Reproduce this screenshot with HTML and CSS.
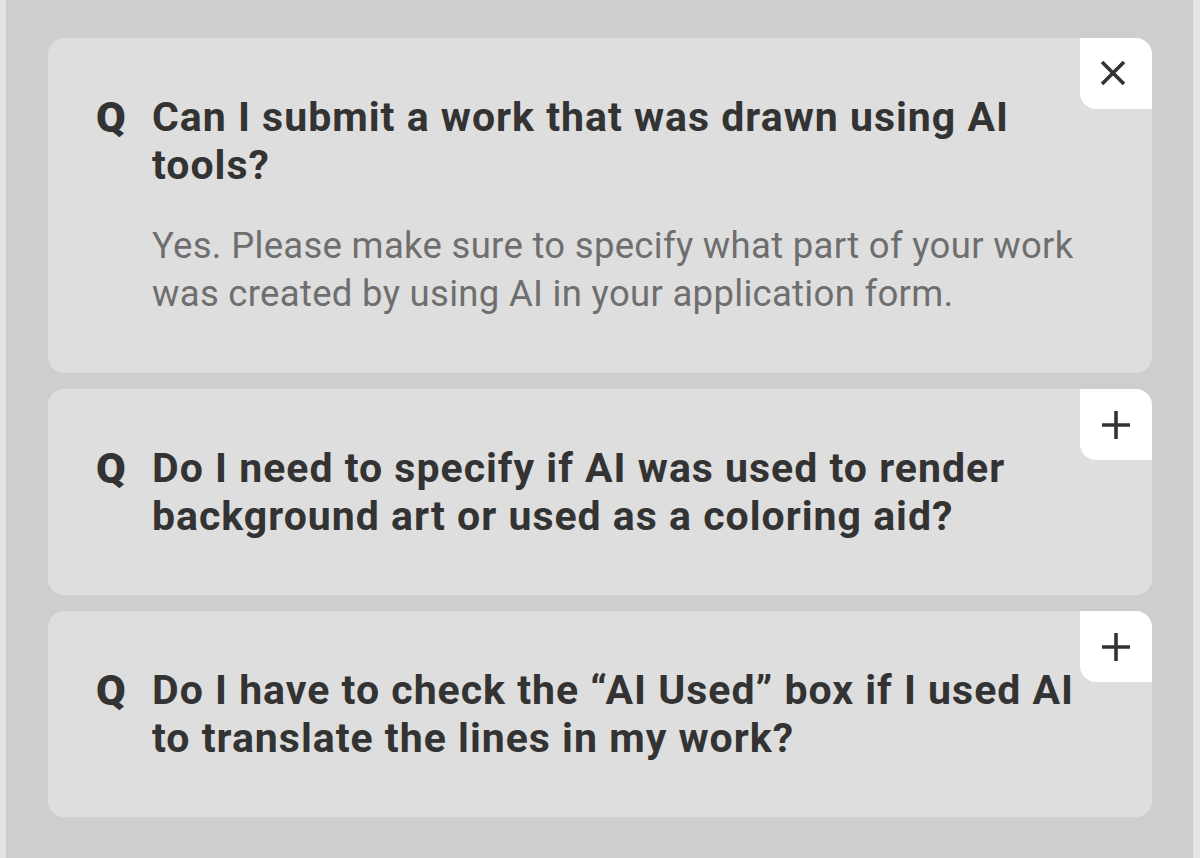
FILE: index.html
```html
<!DOCTYPE html>
<html lang="en">
<head>
<meta charset="utf-8">
<title>FAQ</title>
<link rel="stylesheet" href="styles.css">
</head>
<body>
<div class="page">
  <div class="faq">
    <div class="card">
      <button class="toggle close" aria-label="Close">
        <svg width="24" height="24" viewBox="0 0 24 24"><path d="M1 1 L23 23 M23 1 L1 23" stroke="#333" stroke-width="3.6" fill="none"/></svg>
      </button>
      <div class="question">
        <span class="q">Q</span>
        <div class="body">
          <h2 class="title">Can I submit a work that was drawn using AI tools?</h2>
          <p class="answer">Yes. Please make sure to specify what part of your work was created by using AI in your application form.</p>
        </div>
      </div>
    </div>
    <div class="card">
      <button class="toggle" aria-label="Open">
        <svg width="30" height="30" viewBox="0 0 30 30"><path d="M15 1 V29 M1 15 H29" stroke="#333" stroke-width="3.6" fill="none"/></svg>
      </button>
      <div class="question">
        <span class="q">Q</span>
        <div class="body">
          <h2 class="title">Do I need to specify if AI was used to render background art or used as a coloring aid?</h2>
        </div>
      </div>
    </div>
    <div class="card">
      <button class="toggle" aria-label="Open">
        <svg width="30" height="30" viewBox="0 0 30 30"><path d="M15 1 V29 M1 15 H29" stroke="#333" stroke-width="3.6" fill="none"/></svg>
      </button>
      <div class="question">
        <span class="q">Q</span>
        <div class="body">
          <h2 class="title">Do I have to check the “AI Used” box if I used AI to translate the lines in my work?</h2>
        </div>
      </div>
    </div>
  </div>
</div>
</body>
</html>
```
FILE: styles.css
```css
html, body {
  margin: 0;
  padding: 0;
}
body {
  background: #e4e4e4;
  font-family: Roboto, "Liberation Sans", sans-serif;
}
.page {
  margin: 0 7px 0 6px;
  min-height: 858px;
  background: #cecece;
  padding: 38px 41px 0 42px;
  box-sizing: border-box;
}
.faq {
  display: flex;
  flex-direction: column;
  gap: 16px;
}
.card {
  position: relative;
  background: #dedede;
  border-radius: 16px;
  padding: 55px 50px 55px 48px;
}
.toggle {
  position: absolute;
  top: 0;
  right: 0;
  width: 72px;
  height: 71px;
  border: 0;
  padding: 0;
  background: #ffffff;
  border-radius: 0 16px 0 16px;
  display: flex;
  align-items: center;
  justify-content: center;
}
.toggle.close {
  padding-right: 6px;
  padding-bottom: 1px;
}
.question {
  display: flex;
  gap: 22px;
}
.q {
  width: 34px;
  font-size: 43px;
  font-weight: 900;
  line-height: 48px;
  color: #333333;
  flex: none;
}
.body {
  flex: 1;
}
.title {
  margin: 0;
  font-size: 41px;
  font-weight: 700;
  line-height: 48px;
  color: #333333;
  letter-spacing: 1px;
}
.answer {
  margin: 33px 0 0;
  font-size: 36.5px;
  font-weight: 400;
  line-height: 48px;
  color: #6e6e6e;
  letter-spacing: 0.3px;
}
```
